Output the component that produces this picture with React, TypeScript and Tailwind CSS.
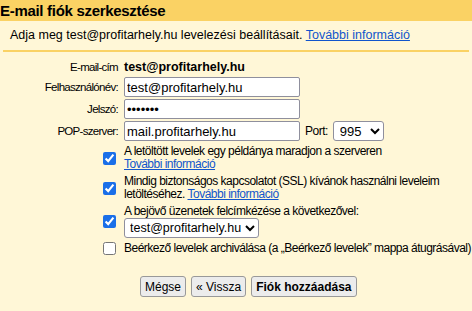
import React from "react";

const Link = ({ children }: { children: React.ReactNode }) => (
    <a href="#" className="text-[#1155cc] underline">{children}</a>
);

const Check = ({ checked }: { checked: boolean }) => (
    <input
        type="checkbox"
        defaultChecked={checked}
        className="m-0 h-[13px] w-[13px] shrink-0 accent-[#1a6fe8]"
    />
);

const inputCls =
    "h-[20px] w-[176px] rounded-[2px] border border-[#8f8f9d] bg-white px-[2px] text-[13px] outline-none";

const btnCls =
    "h-[21px] rounded-[3px] border border-[#999] bg-[#ececec] px-[4px] text-[12px] leading-[18px]";

export default function App() {
    return (
        <div className="w-[472px] h-[311px] overflow-hidden bg-[#fff7d7] text-black font-['Liberation_Sans',Arial,sans-serif]">
            {/* header */}
            <div className="h-[21px] bg-[#fad264] pt-[2px] text-[15px] font-bold leading-[17px] tracking-[-0.3px]">
                E-mail fiók szerkesztése
            </div>

            <div className="mx-[3px] border-b-2 border-[#fad264] pl-[7px] pt-[7px] pb-[7px] text-[12.5px] leading-[15px]">
                Adja meg test@profitarhely.hu levelezési beállításait.{" "}
                <Link>További információ</Link>
            </div>

            <div className="pt-[8px] text-[12px] leading-[15px]">
                {/* fields */}
                <div className="grid grid-cols-[118px_1fr] gap-x-[6px] gap-y-[2px] items-center">
                    <div className="text-right text-[11.5px] tracking-[-0.7px]">E-mail-cím</div>
                    <div className="text-[12.5px] font-bold">test@profitarhely.hu</div>

                    <div className="text-right text-[11.5px] tracking-[-0.7px]">Felhasználónév:</div>
                    <input defaultValue="test@profitarhely.hu" className={inputCls} />

                    <div className="text-right text-[11.5px] tracking-[-0.7px]">Jelszó:</div>
                    <input type="password" defaultValue="1234567" className={inputCls} />

                    <div className="text-right text-[11.5px] tracking-[-0.7px]">POP-szerver:</div>
                    <div className="flex items-center gap-[5px]">
                        <input defaultValue="mail.profitarhely.hu" className={inputCls} />
                        <span className="tracking-[-0.5px]">Port:</span>
                        <select
                            defaultValue="995"
                            className="h-[20px] w-[51px] rounded-[3px] border border-[#8f8f9d] bg-white pl-[2px] text-[13px] outline-none"
                        >
                            <option>110</option>
                            <option>995</option>
                        </select>
                    </div>
                </div>

                {/* options */}
                <div className="mt-[4px] flex flex-col gap-[4px] pl-[103px] leading-[13px] tracking-[-0.5px] whitespace-nowrap">
                    <div className="flex items-center gap-[8px]">
                        <Check checked />
                        <div>
                            A letöltött levelek egy példánya maradjon a szerveren
                            <br />
                            <Link>További információ</Link>
                        </div>
                    </div>
                    <div className="flex items-center gap-[8px]">
                        <Check checked />
                        <div>
                            Mindig biztonságos kapcsolatot (SSL) kívánok használni leveleim
                            <br />
                            letöltéséhez. <Link>További információ</Link>
                        </div>
                    </div>
                    <div className="flex items-center gap-[8px]">
                        <Check checked />
                        <div>
                            A bejövő üzenetek felcímkézése a következővel:
                            <div className="tracking-normal">
                                <select
                                    defaultValue="test@profitarhely.hu"
                                    className="h-[20px] w-[135px] rounded-[3px] border border-[#8f8f9d] bg-white pl-[1px] text-[12.5px] outline-none"
                                >
                                    <option>test@profitarhely.hu</option>
                                </select>
                            </div>
                        </div>
                    </div>
                    <div className="flex items-center gap-[8px]">
                        <Check checked={false} />
                        <div>Beérkező levelek archiválása (a „Beérkező levelek” mappa átugrásával)</div>
                    </div>
                </div>

                {/* buttons */}
                <div className="mt-[21px] flex gap-[5px] pl-[140px]">
                    <button className={btnCls}>Mégse</button>
                    <button className={btnCls}>« Vissza</button>
                    <button className={`${btnCls} font-bold`}>Fiók hozzáadása</button>
                </div>
            </div>
        </div>
    );
}
